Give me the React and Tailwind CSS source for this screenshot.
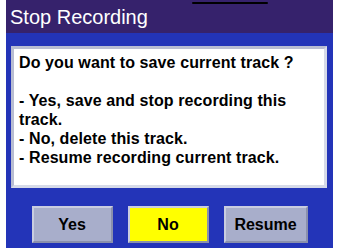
import React from "react";

export default function App() {
  const font = { fontFamily: '"Liberation Sans", Arial, sans-serif' };
  return (
    <div className="w-[337px] h-[248px] bg-white flex overflow-hidden" style={font}>
      <div className="ml-[6px] w-[327px] h-full flex flex-col relative">
        <div className="absolute top-[2px] left-[186px] w-[76px] h-[2px] bg-black rounded-full" />
        <div className="h-[33px] bg-[#36226c] flex items-center pl-[4px] text-[20px] text-white leading-none">
          Stop Recording
        </div>
        <div className="flex-1 bg-[#2334b8] flex flex-col">
          <div className="mt-[13px] ml-[5px] mr-[6px] h-[142px] bg-white border-[3px] border-t-[#b8bdd2] border-l-[#b8bdd2] border-r-[#d6dae8] border-b-[#d6dae8] pl-[5px] pr-[3px] pt-[4px] text-[16px] font-bold text-black leading-[19px] tracking-[0.1px]">
            <div>Do you want to save current track ?</div>
            <div className="h-[19px]" />
            <div>- Yes, save and stop recording this track.</div>
            <div>- No, delete this track.</div>
            <div>- Resume recording current track.</div>
          </div>
          <div className="mt-[18px] flex justify-center gap-[15px]">
            <div className="w-[81px] h-[37px] bg-[#a8aecb] border-2 border-t-[#c9cde0] border-l-[#c9cde0] border-r-[#8a90ad] border-b-[#8a90ad] flex items-center justify-center text-[16px] font-bold text-black">
              Yes
            </div>
            <div className="w-[81px] h-[37px] bg-[#ffff00] border-2 border-t-[#c9cde0] border-l-[#c9cde0] border-r-[#8a90ad] border-b-[#8a90ad] flex items-center justify-center text-[16px] font-bold text-black">
              No
            </div>
            <div className="w-[84px] h-[37px] bg-[#a8aecb] border-2 border-t-[#c9cde0] border-l-[#c9cde0] border-r-[#8a90ad] border-b-[#8a90ad] flex items-center justify-center text-[16px] font-bold text-black">
              Resume
            </div>
          </div>
        </div>
      </div>
    </div>
  );
}
